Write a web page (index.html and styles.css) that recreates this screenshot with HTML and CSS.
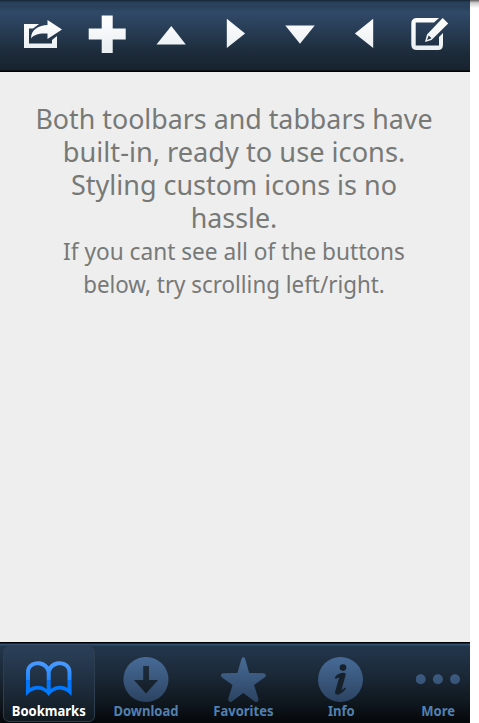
FILE: index.html
```
<!DOCTYPE html>
<html lang="en">
<head>
<meta charset="utf-8">
<title>Icons</title>
<link rel="stylesheet" href="styles.css">
</head>
<body>
<svg class="defs" width="0" height="0" aria-hidden="true">
  <defs>
    <linearGradient id="white" gradientUnits="userSpaceOnUse" x1="0" y1="16" x2="0" y2="53"><stop offset="0" stop-color="#fff"/><stop offset="1" stop-color="#e9edf1"/></linearGradient>
    <linearGradient id="steel" gradientUnits="userSpaceOnUse" x1="0" y1="0" x2="0" y2="46"><stop offset="0" stop-color="#476b97"/><stop offset="1" stop-color="#2b4260"/></linearGradient>
    <linearGradient id="blue" gradientUnits="userSpaceOnUse" x1="0" y1="5" x2="0" y2="40"><stop offset="0" stop-color="#4a9aff"/><stop offset=".5" stop-color="#2388ff"/><stop offset=".53" stop-color="#0074ff"/><stop offset="1" stop-color="#007cff"/></linearGradient>
  </defs>
</svg>
<div class="app">
  <header class="toolbar">
    <svg class="tool" viewBox="0 0 64 72"><path d="M28 24H13V48H46V36L41 40V43.500H18V28.500H22Z M36.500 20L51 29.500L36.500 39V33.500C28 33 23 34.500 20 38.500C20 29 28 25.500 36.500 25Z"/></svg>
    <svg class="tool" viewBox="0 0 64 72"><path d="M26.700 15.500H37.700V28.500H50.700V39.500H37.700V53H26.700V39.500H13.700V28.500H26.700Z"/></svg>
    <svg class="tool" viewBox="0 0 64 72"><path d="M31.300 26L45.800 44.500H16.500Z"/></svg>
    <svg class="tool" viewBox="0 0 64 72"><path d="M22.800 18.800V48L41.100 33.500Z"/></svg>
    <svg class="tool" viewBox="0 0 64 72"><path d="M17.300 25.500H46.700L32 43.700Z"/></svg>
    <svg class="tool" viewBox="0 0 64 72"><path d="M41.200 18.800V48L22.900 33.500Z"/></svg>
    <svg class="tool" viewBox="0 0 64 72"><path d="M42 18H20Q14.300 18 14.300 23.500V44.500Q14.300 50 20 50H41Q46 50 46 44.500V33L42 37V45.500H18.700V22.500H37Z"/><path fill-rule="evenodd" d="M45.700 18L51.200 23.500L34.500 40L28 42L30 34.500Z M31.700 35.500L30 40L34.500 38.300Z"/></svg>
  </header>
  <main class="content">
    <h1><span>Both toolbars and tabbars have</span><span class="l2">built-in, ready to use icons.</span><span class="l3">Styling custom icons is no</span><span>hassle.</span></h1>
    <p><span>If you cant see all of the buttons</span><span class="l6">below, try scrolling left/right.</span></p>
  </main>
  <nav class="tabbar">
    <div class="tab active">
      <svg class="glyph" viewBox="0 0 46 46"><path fill-rule="evenodd" class="book" d="M0 39V15C0 3 17 1 22.700 9.500C28.500 1 45.500 3 45.500 15V39C38 30 28 31 22.700 39C17.500 31 7.500 30 0 39Z M4 31C9 27.500 16 28 20.700 32V15C18 5.500 4 6.500 4 15Z M24.700 32C29.500 28 36.500 27.500 41.500 31V15C41.500 6.500 27.500 5.500 24.700 15Z"/></svg>
      <span>Bookmarks</span>
    </div>
    <div class="tab">
      <svg class="glyph" viewBox="0 0 46 46"><path fill-rule="evenodd" d="M23 0A22.500 22.500 0 1 1 22.900 0Z M20.200 9V23H11L23 36.500L35 23H26V9Z"/></svg>
      <span>Download</span>
    </div>
    <div class="tab">
      <svg class="glyph" viewBox="0 0 46 46"><path d="M20.400 2Q22.300 -2 24.200 2L28.200 16L43 16.200Q46.500 18 43.500 20.500L33 28L37.500 42Q37.500 45.500 34 44.800L22.300 36L10.600 44.800Q7 45.500 7.200 42L11.600 28L1 20.500Q-1.500 17.500 1.800 16.200L16.400 16Z"/></svg>
      <span>Favorites</span>
    </div>
    <div class="tab">
      <svg class="glyph" viewBox="0 0 46 46"><circle cx="22.500" cy="22.500" r="22.500"/><g class="cut"><circle cx="25" cy="10.600" r="3.300"/><path d="M17.500 19.500C19.500 16.800 23.500 15.600 26 15.800Q28.300 16 27.500 18.500L23.400 33.200Q25.500 32.500 26.800 30.600L28 31.500C25 36 21 38 18.700 37.600Q16.500 37 17.300 34L21.300 20.200L18.200 21.800Q16 21.700 17.500 19.500Z"/></g></svg>
      <span>Info</span>
    </div>
    <div class="tab">
      <svg class="glyph" viewBox="0 0 46 46"><circle cx="4.700" cy="22.300" r="5"/><circle cx="21.900" cy="22.300" r="5"/><circle cx="39" cy="22.300" r="5"/></svg>
      <span>More</span>
    </div>
  </nav>
</div>
<aside class="edge"></aside>
</body>
</html>
```
FILE: styles.css
```
* { box-sizing: border-box; }
body {
  margin: 0;
  display: flex;
  width: 479px;
  height: 723px;
  overflow: hidden;
  background: #fff;
  font-family: "Noto Sans", "Open Sans", sans-serif;
}
.defs { position: absolute; }
.app {
  width: 470px;
  height: 723px;
  display: flex;
  flex-direction: column;
  background: #eee;
}
.edge { width: 9px; height: 8px; background: linear-gradient(#625e5e, #ccc 35%, #fff); }
.toolbar {
  flex: none;
  height: 72px;
  padding: 0 9px 0 11px;
  display: grid;
  grid-template-columns: repeat(7, 64.3px);
  overflow: hidden;
  background: linear-gradient(#13202d 0, #203448 1px, #29425c 3px, #29405b 7px, #314a69 12px, #2b415c 24px, #1d2c3b 52px, #17222e 70px, #000 71px);
}
.tool { width: 64px; height: 72px; fill: url(#white); }
.content {
  flex: 1;
  padding: 30px 2px 0 0;
  color: #777977;
  text-align: center;
}
h1, p { margin: 0; font-weight: 400; line-height: 33px; }
h1 { font-size: 28px; }
p { font-size: 23px; padding-top: 1px; }
h1 span, p span { display: block; white-space: nowrap; }
h1 span { transform: scaleX(.957); }
h1 .l2 { transform: scaleX(.971); }
h1 .l3 { transform: scaleX(.963); }
p span { transform: scaleX(.985); }
p .l6 { transform: scaleX(.972); }
.tabbar {
  flex: none;
  height: 81px;
  padding: 4px 0 0 3px;
  display: flex;
  gap: 5.4px;
  overflow: hidden;
  background: linear-gradient(#000 0, #000 1px, #314f70 2px, #314f70 3px, #22354a 4px, #213347 12px, #1a2735 35px, #0f161d 62px, #05080b 80px);
}
.tab {
  flex: none;
  width: 92px;
  height: 76px;
  padding-top: 10px;
  border: 1px solid transparent;
  border-radius: 6px;
  display: flex;
  flex-direction: column;
  align-items: center;
  color: #5280af;
  font-size: 14px;
  font-weight: 700;
  line-height: 18px;
}
.tab span { transform: scaleX(.93); }
.active { color: #fff; border-color: #2c3e50; background: linear-gradient(#2a4059, #1f2e3f 50%, #10181f); }
.glyph { flex: none; width: 46px; height: 46px; margin-bottom: -1px; fill: url(#steel); }
.book { fill: url(#blue); }
.cut { fill: #17212c; }
```
